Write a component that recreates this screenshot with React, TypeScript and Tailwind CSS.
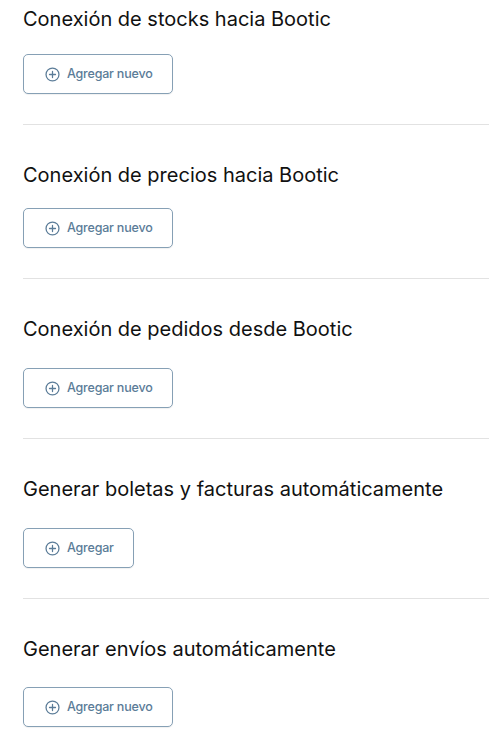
import React from "react";

function PlusCircle() {
  return (
    <svg width="15" height="15" viewBox="0 0 16 16" fill="none" className="shrink-0">
      <circle cx="8" cy="8" r="6.9" stroke="#5b7c98" strokeWidth="1.35" />
      <path d="M8 4.8v6.4M4.8 8h6.4" stroke="#5b7c98" strokeWidth="1.35" strokeLinecap="round" />
    </svg>
  );
}

function AddButton({ label, mt }: { label: string; mt: string }) {
  return (
    <button
      className={`${mt} flex h-[40px] items-center gap-[7px] rounded-[5px] border border-[#86a0b5] bg-white pl-[21px] pr-[19px] text-[12.5px] font-medium text-[#5b7c98] shadow-[0_1px_1px_rgba(0,0,0,0.06)]`}
      style={{ fontFamily: "Inter, 'Noto Sans', sans-serif" }}
    >
      <PlusCircle />
      <span className="tracking-[-0.2px]">{label}</span>
    </button>
  );
}

export default function App() {
  const sections = [
    { title: "Conexión de stocks hacia Bootic", label: "Agregar nuevo", top: "mt-[7px]", btn: "mt-[23px]", div: true },
    { title: "Conexión de precios hacia Bootic", label: "Agregar nuevo", top: "mt-[38px]", btn: "mt-[21px]", div: true },
    { title: "Conexión de pedidos desde Bootic", label: "Agregar nuevo", top: "mt-[38px]", btn: "mt-[27px]", div: true },
    { title: "Generar boletas y facturas automáticamente", label: "Agregar", top: "mt-[38px]", btn: "mt-[27px]", div: true },
    { title: "Generar envíos automáticamente", label: "Agregar nuevo", top: "mt-[38px]", btn: "mt-[26px]", div: false },
  ];
  return (
    <div className="min-h-[751px] w-[489px] bg-white pl-[23px]" style={{ fontFamily: "Inter, 'Noto Sans', sans-serif" }}>
      {sections.map((s, i) => (
        <div key={i} className="flex flex-col items-start">
          <div className={`${s.top} text-[20px] font-normal leading-[24px] text-[#111111]`}>{s.title}</div>
          <AddButton label={s.label} mt={s.btn} />
          {s.div && <div className="mt-[30px] h-px w-full bg-[#e2e2e2]" />}
        </div>
      ))}
    </div>
  );
}
